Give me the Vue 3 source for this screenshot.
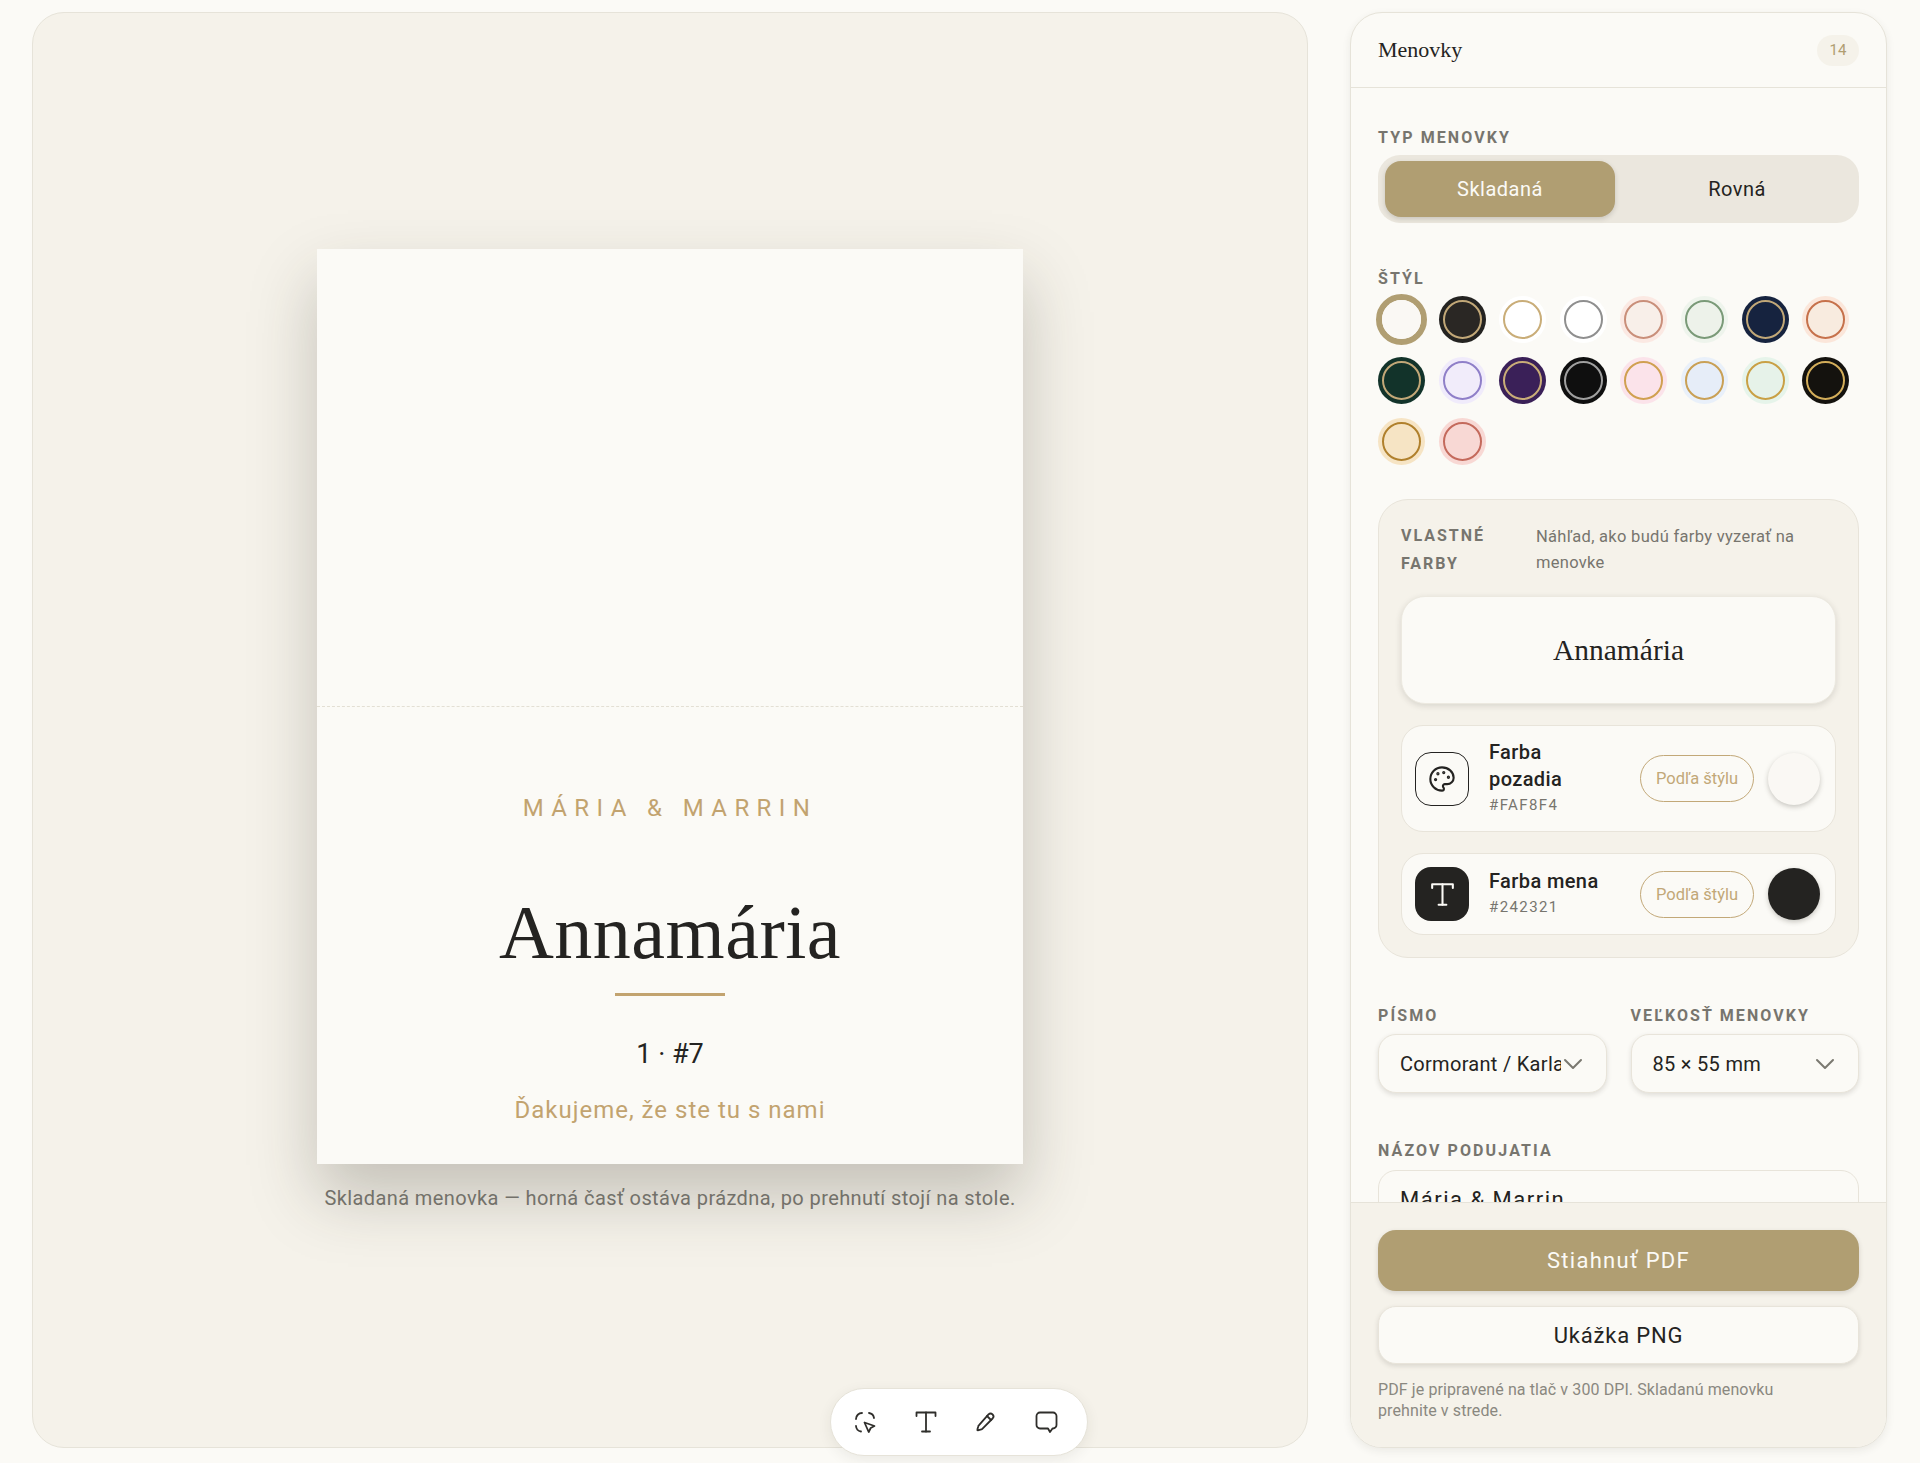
<template>
  <div class="page">
    <main class="stage">
      <div class="card">
        <div class="card-top"></div>
        <div class="card-bottom">
          <div class="event">MÁRIA &amp; MARRIN</div>
          <div class="guest">Annamária</div>
          <div class="rule"></div>
          <div class="seat">1 · #7</div>
          <div class="thanks">Ďakujeme, že ste tu s nami</div>
        </div>
      </div>
      <p class="caption">Skladaná menovka — horná časť ostáva prázdna, po prehnutí stojí na stole.</p>
    </main>

    <aside class="panel">
      <header class="panel-head">
        <h2>Menovky</h2>
        <span class="badge">14</span>
      </header>

      <div class="panel-body">
        <section class="block">
          <div class="label">TYP MENOVKY</div>
          <div class="toggle">
            <div class="toggle-item active">Skladaná</div>
            <div class="toggle-item">Rovná</div>
          </div>
        </section>

        <section class="block styles">
          <div class="label">ŠTÝL</div>
          <div class="swatches">
            <div
              v-for="(s, i) in swatches"
              :key="i"
              class="swatch"
              :class="{ selected: i === 0 }"
              :style="{ '--bg': s.bg, '--ring': s.ring, '--halo': s.halo }"
            ></div>
          </div>
        </section>

        <section class="custom">
          <div class="custom-head">
            <div class="custom-title">VLASTNÉ FARBY</div>
            <div class="custom-desc">Náhľad, ako budú farby vyzerať na menovke</div>
          </div>
          <div class="preview">Annamária</div>
          <div class="color-row">
            <div class="color-icon outline">
              <svg width="28" height="28" viewBox="0 0 24 24" fill="none" stroke="currentColor" stroke-width="1.8" stroke-linecap="round" stroke-linejoin="round">
                <circle cx="13.5" cy="6.5" r=".5" fill="currentColor" />
                <circle cx="17.5" cy="10.5" r=".5" fill="currentColor" />
                <circle cx="8.5" cy="7.5" r=".5" fill="currentColor" />
                <circle cx="6.5" cy="12.5" r=".5" fill="currentColor" />
                <path d="M12 2C6.5 2 2 6.5 2 12s4.5 10 10 10c.926 0 1.648-.746 1.648-1.688 0-.437-.18-.835-.437-1.125-.29-.289-.438-.652-.438-1.125a1.64 1.64 0 0 1 1.668-1.668h1.996c3.051 0 5.555-2.503 5.555-5.554C21.965 6.012 17.461 2 12 2z" />
              </svg>
            </div>
            <div class="color-text">
              <div class="color-name">Farba pozadia</div>
              <div class="color-hex">#FAF8F4</div>
            </div>
            <div class="pill">Podľa štýlu</div>
            <div class="dot light"></div>
          </div>
          <div class="color-row">
            <div class="color-icon solid">
              <svg width="31" height="31" viewBox="0 0 24 24" fill="none" stroke="currentColor" stroke-width="1.6" stroke-linecap="round" stroke-linejoin="round">
                <path d="M4 7V4h16v3" />
                <path d="M9 20h6" />
                <path d="M12 4v16" />
              </svg>
            </div>
            <div class="color-text">
              <div class="color-name">Farba mena</div>
              <div class="color-hex">#242321</div>
            </div>
            <div class="pill">Podľa štýlu</div>
            <div class="dot dark"></div>
          </div>
        </section>

        <section class="two-cols">
          <div class="col">
            <div class="label">PÍSMO</div>
            <div class="select">
              <span class="select-text">Cormorant / Karla</span>
              <svg width="24" height="24" viewBox="0 0 24 24" fill="none" stroke="#7a7870" stroke-width="2" stroke-linecap="round" stroke-linejoin="round"><path d="m4 8 8 8 8-8" /></svg>
            </div>
          </div>
          <div class="col">
            <div class="label">VEĽKOSŤ MENOVKY</div>
            <div class="select">
              <span class="select-text">85 × 55 mm</span>
              <svg width="24" height="24" viewBox="0 0 24 24" fill="none" stroke="#7a7870" stroke-width="2" stroke-linecap="round" stroke-linejoin="round"><path d="m4 8 8 8 8-8" /></svg>
            </div>
          </div>
        </section>

        <section class="block title-block">
          <div class="label">NÁZOV PODUJATIA</div>
          <div class="input">Mária &amp; Marrin</div>
        </section>
      </div>

      <footer class="panel-foot">
        <button class="btn primary">Stiahnuť PDF</button>
        <button class="btn secondary">Ukážka PNG</button>
        <p class="note">PDF je pripravené na tlač v 300 DPI. Skladanú menovku prehnite v strede.</p>
      </footer>
    </aside>

    <div class="toolbar">
      <svg width="24" height="24" viewBox="0 0 24 24" fill="none" stroke="currentColor" stroke-width="1.8" stroke-linecap="round" stroke-linejoin="round">
        <path d="M3 9a6 6 0 0 1 6-6" />
        <path d="M16 3a6 6 0 0 1 5 5" />
        <path d="M3 16a6 6 0 0 0 5 5.500" />
        <path d="M11.500 12.500l10 3.500-3.800 2-2 4z" />
      </svg>
      <svg width="24" height="24" viewBox="0 0 24 24" fill="none" stroke="currentColor" stroke-width="1.8" stroke-linecap="round" stroke-linejoin="round">
        <path d="M2.500 6V2.500h19V6" />
        <path d="M8 21.500h8" />
        <path d="M12 2.500v19" />
      </svg>
      <svg width="24" height="24" viewBox="0 0 24 24" fill="none" stroke="currentColor" stroke-width="1.8" stroke-linecap="round" stroke-linejoin="round">
        <path d="M14.500 4.400a2.900 2.900 0 0 1 4.100 4.100L8.300 18.800a2 2 0 0 1-.9.5l-3.600 1a.4.4 0 0 1-.5-.5l1-3.600a2 2 0 0 1 .5-.9z" />
        <path d="m13 6 4 4" />
      </svg>
      <svg width="24" height="24" viewBox="0 0 24 24" fill="none" stroke="currentColor" stroke-width="1.8" stroke-linecap="round" stroke-linejoin="round">
        <path d="M5 2.500h13A3.500 3.500 0 0 1 21.500 6v9a3.500 3.500 0 0 1-3.500 3.500h-.5L15 22l-2-3.500H5A3.500 3.500 0 0 1 1.500 15V6A3.500 3.500 0 0 1 5 2.500z" />
      </svg>
    </div>
  </div>
</template>

<script setup>
const swatches = [
  { bg: '#faf8f4', ring: 'transparent', halo: '#faf8f4' },
  { bg: '#2a2724', ring: '#c2a878', halo: '#242321' },
  { bg: '#ffffff', ring: '#c9ad78', halo: '#ffffff' },
  { bg: '#ffffff', ring: '#8f8f8f', halo: '#ffffff' },
  { bg: '#f8efe9', ring: '#c98f7a', halo: '#fbe9e3' },
  { bg: '#edf2ea', ring: '#7a9a78', halo: '#eef4ec' },
  { bg: '#16233f', ring: '#c2a878', halo: '#16233f' },
  { bg: '#f8ebdf', ring: '#c6714b', halo: '#fbe6da' },
  { bg: '#12332a', ring: '#c2a878', halo: '#12332a' },
  { bg: '#f1ecfa', ring: '#8f7fc8', halo: '#f0ebfb' },
  { bg: '#3a2058', ring: '#c9ad78', halo: '#3a2058' },
  { bg: '#0f0f0f', ring: '#a0a0a0', halo: '#0f0f0f' },
  { bg: '#fbe3ea', ring: '#d0a050', halo: '#fbe3ea' },
  { bg: '#e6edf8', ring: '#c9a055', halo: '#e9f0fa' },
  { bg: '#e6f2e9', ring: '#c9a045', halo: '#e6f4ea' },
  { bg: '#14120e', ring: '#d4ae5a', halo: '#14120e' },
  { bg: '#f6e4c4', ring: '#b0802c', halo: '#f6e4c4' },
  { bg: '#f8d8d4', ring: '#c46a5c', halo: '#f8d8d4' }
]
</script>

<style>
html,
body {
  margin: 0;
  background: #fbfaf6;
}
</style>

<style scoped>
.page {
  position: relative;
  box-sizing: border-box;
  width: 1920px;
  height: 1463px;
  padding: 12px 33px 15px 32px;
  display: flex;
  gap: 42px;
  background: #fbfaf6;
  color: #242321;
  font-family: Roboto, "Liberation Sans", sans-serif;
  overflow: hidden;
}
.stage {
  flex: 1;
  display: flex;
  flex-direction: column;
  align-items: center;
  justify-content: center;
  background: #f5f2ea;
  border: 1.5px solid #e6e3d9;
  border-radius: 32px;
}
.card {
  width: 706px;
  height: 915px;
  display: flex;
  flex-direction: column;
  background: #fbfaf6;
  box-shadow: 0 32px 62px rgba(50, 46, 36, 0.25);
}
.card-top {
  height: 457px;
  border-bottom: 1.5px dashed #e3dfd4;
}
.card-bottom {
  flex: 1;
  display: flex;
  flex-direction: column;
  align-items: center;
}
.event {
  margin-top: 84px;
  font-size: 24px;
  line-height: 34px;
  letter-spacing: 7.4px;
  color: #c2a36f;
}
.guest {
  margin-top: 62px;
  font-family: "Liberation Serif", serif;
  font-size: 76px;
  line-height: 90px;
  letter-spacing: 0.5px;
}
.rule {
  margin-top: 16px;
  width: 110px;
  height: 3px;
  background: #c2a36f;
}
.seat {
  margin-top: 41px;
  font-size: 27px;
  line-height: 34px;
}
.thanks {
  margin-top: 22px;
  font-size: 24px;
  line-height: 34px;
  color: #c2a36f;
  letter-spacing: 1px;
}
.caption {
  margin: 21px 0 0;
  font-size: 20px;
  line-height: 26px;
  letter-spacing: 0.4px;
  color: #73716a;
}

.panel {
  width: 537px;
  flex-shrink: 0;
  box-sizing: border-box;
  display: flex;
  flex-direction: column;
  background: #fbfaf6;
  border: 1.5px solid #e6e3d9;
  border-radius: 32px;
  box-shadow: 0 3px 8px rgba(50, 46, 36, 0.08);
  overflow: hidden;
}
.panel-head {
  height: 75px;
  flex-shrink: 0;
  box-sizing: border-box;
  display: flex;
  align-items: center;
  justify-content: space-between;
  padding: 0 27px;
  border-bottom: 1.5px solid #e6e3d9;
}
.panel-head h2 {
  margin: 0;
  font-family: "Liberation Serif", serif;
  font-size: 22px;
  font-weight: 400;
}
.badge {
  width: 42px;
  height: 31px;
  border-radius: 16px;
  background: #f5f2ea;
  display: flex;
  align-items: center;
  justify-content: center;
  font-size: 15px;
  color: #b09e72;
}
.panel-body {
  flex: 1;
  min-height: 0;
  overflow: hidden;
  padding: 0 27px;
}
.label {
  font-size: 16px;
  line-height: 20px;
  font-weight: 700;
  letter-spacing: 2.1px;
  color: #77756e;
}
.block {
  margin-top: 40px;
}
.toggle {
  margin-top: 7px;
  height: 68px;
  box-sizing: border-box;
  padding: 6px 7px;
  display: flex;
  background: #ebe7de;
  border-radius: 22px;
}
.toggle-item {
  flex: 1;
  display: flex;
  align-items: center;
  justify-content: center;
  font-size: 20px;
  letter-spacing: 0.5px;
  border-radius: 16px;
}
.toggle-item + .toggle-item {
  padding-left: 7px;
}
.toggle-item.active {
  flex: 0 0 230px;
  background: #b09e72;
  color: #fbfaf6;
  box-shadow: 0 2px 5px rgba(50, 46, 36, 0.18);
}
.styles {
  margin-top: 46px;
}
.swatches {
  margin-top: 7px;
  display: grid;
  grid-template-columns: repeat(8, 47px);
  column-gap: 13.6px;
  row-gap: 14px;
}
.swatch {
  position: relative;
  width: 47px;
  height: 47px;
  border-radius: 50%;
  background: var(--halo);
}
.swatch::after {
  content: "";
  position: absolute;
  inset: 4px;
  background: var(--bg);
  border: 2.5px solid var(--ring);
  border-radius: 50%;
}
.swatch.selected {
  outline: 6px solid #b09e72;
  outline-offset: -4px;
}
.custom {
  margin-top: 34px;
  padding: 22px;
  box-sizing: border-box;
  background: #f5f2ea;
  border: 1.5px solid #e8e4da;
  border-radius: 30px;
}
.custom-head {
  display: grid;
  grid-template-columns: 135px 1fr;
  align-items: start;
}
.custom-title {
  font-size: 16px;
  line-height: 28px;
  font-weight: 700;
  letter-spacing: 2px;
  color: #77756e;
}
.custom-desc {
  font-size: 16.5px;
  line-height: 26px;
  letter-spacing: 0.3px;
  color: #77756e;
  padding-top: 2px;
}
.preview {
  margin-top: 18px;
  height: 108px;
  display: flex;
  align-items: center;
  justify-content: center;
  font-family: "Liberation Serif", serif;
  font-size: 29.5px;
  background: #fbfaf6;
  border: 1.5px solid #ece9e0;
  border-radius: 24px;
  box-shadow: 0 2px 6px rgba(50, 46, 36, 0.14);
  box-sizing: border-box;
}
.color-row {
  margin-top: 21px;
  box-sizing: border-box;
  display: flex;
  align-items: center;
  padding: 13px 15px 13px 13px;
  background: #fbfaf6;
  border: 1.5px solid #e8e4da;
  border-radius: 22px;
}
.color-icon {
  width: 54px;
  height: 54px;
  flex-shrink: 0;
  box-sizing: border-box;
  display: flex;
  align-items: center;
  justify-content: center;
  border-radius: 16px;
}
.color-icon.outline {
  border: 1.8px solid #242321;
}
.color-icon.solid {
  background: #242321;
  color: #fbfaf6;
}
.color-text {
  flex: 1;
  margin-left: 20px;
  min-width: 0;
}
.color-name {
  font-size: 20px;
  line-height: 27px;
  font-weight: 500;
  letter-spacing: 0.4px;
  max-width: 120px;
}
.color-hex {
  font-size: 15px;
  line-height: 25px;
  letter-spacing: 1.4px;
  color: #77756e;
}
.pill {
  width: 114px;
  height: 47px;
  box-sizing: border-box;
  display: flex;
  align-items: center;
  justify-content: center;
  flex-shrink: 0;
  font-size: 16.5px;
  color: #c2a878;
  border: 1.5px solid #c2a878;
  border-radius: 24px;
}
.dot {
  width: 52px;
  height: 52px;
  margin-left: 14px;
  flex-shrink: 0;
  border-radius: 50%;
  box-shadow: 0 2px 5px rgba(50, 46, 36, 0.25);
}
.dot.light {
  background: #faf8f4;
}
.dot.dark {
  background: #242321;
}
.two-cols {
  margin-top: 48px;
  display: grid;
  grid-template-columns: minmax(0, 1fr) minmax(0, 1fr);
  column-gap: 24px;
}
.select {
  margin-top: 8px;
  height: 59px;
  box-sizing: border-box;
  display: flex;
  align-items: center;
  padding: 0 21px;
  background: #fbfaf6;
  border: 1.5px solid #e8e4da;
  border-radius: 18px;
  box-shadow: 0 2px 5px rgba(50, 46, 36, 0.14);
}
.select svg {
  flex-shrink: 0;
}
.select-text {
  flex: 1;
  min-width: 0;
  overflow: hidden;
  white-space: nowrap;
  font-size: 20px;
  letter-spacing: 0.3px;
}
.title-block {
  margin-top: 48px;
}
.input {
  margin-top: 9px;
  height: 59px;
  box-sizing: border-box;
  display: flex;
  align-items: center;
  padding: 0 21px;
  font-size: 22px;
  letter-spacing: 1.5px;
  background: #fbfaf6;
  border: 1.5px solid #e8e4da;
  border-radius: 18px;
}
.panel-foot {
  flex-shrink: 0;
  box-sizing: border-box;
  height: 245px;
  padding: 27px 27px 0;
  background: #f5f2ea;
  border-top: 1.5px solid #e6e3d9;
}
.btn {
  display: block;
  width: 100%;
  font-family: inherit;
  cursor: pointer;
}
.btn.primary {
  height: 61px;
  border: 0;
  border-radius: 18px;
  background: #b09e72;
  color: #fbfaf6;
  font-size: 22px;
  letter-spacing: 1.3px;
  box-shadow: 0 2px 5px rgba(50, 46, 36, 0.16);
}
.btn.secondary {
  margin-top: 15px;
  height: 58px;
  background: #fbfaf6;
  color: #242321;
  font-size: 22px;
  letter-spacing: 0.8px;
  border: 1.5px solid #e8e4da;
  border-radius: 18px;
  box-shadow: 0 2px 5px rgba(50, 46, 36, 0.14);
}
.note {
  margin: 15px 0 0;
  max-width: 440px;
  font-size: 16px;
  line-height: 21px;
  letter-spacing: 0.1px;
  color: #8a8880;
}

.toolbar {
  position: absolute;
  left: 830px;
  top: 1388px;
  width: 258px;
  height: 68px;
  box-sizing: border-box;
  display: flex;
  align-items: center;
  gap: 36.6px;
  padding: 0 0 0 22px;
  background: #ffffff;
  border: 1px solid #e6e3d9;
  border-radius: 34px;
  box-shadow: 0 4px 14px rgba(50, 46, 36, 0.08);
  color: #2f2e2b;
}
</style>
